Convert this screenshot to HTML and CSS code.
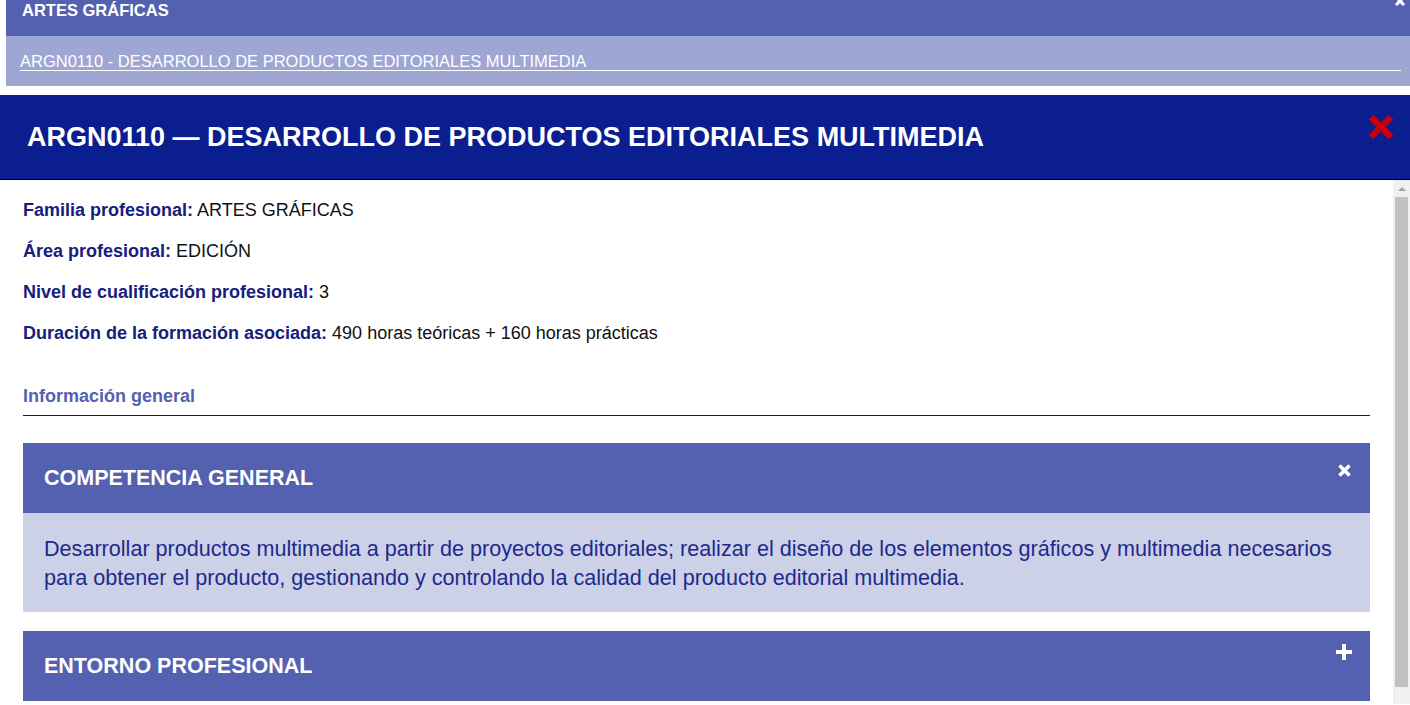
FILE: index.html
```html
<!DOCTYPE html>
<html>
<head>
  <title>ARGN0110 — Desarrollo de productos editoriales multimedia</title>
  <meta charset="UTF-8" />
  <link rel="stylesheet" href="styles.css">
</head>
<body>
  <div class="crumbs">
    <div class="crumb-top">
      ARTES GRÁFICAS
      <svg class="crumb-close" width="12" height="12" viewBox="0 0 12 12">
        <path d="M2 2 L10 10 M10 2 L2 10" stroke="#fff" stroke-width="3" />
      </svg>
    </div>
    <div class="crumb-sub">
      <a class="crumb-link" href="#">ARGN0110 - DESARROLLO DE PRODUCTOS EDITORIALES MULTIMEDIA</a>
    </div>
  </div>

  <div class="modal">
    <div class="modal-head">
      <h1>ARGN0110 — DESARROLLO DE PRODUCTOS EDITORIALES MULTIMEDIA</h1>
      <svg class="modal-close" width="28" height="28" viewBox="0 0 28 28">
        <path d="M4 4 L24 24 M24 4 L4 24" stroke="#c8000a" stroke-width="6.5" />
      </svg>
    </div>

    <div class="modal-body">
      <div class="content">
        <p class="field"><b>Familia profesional:</b> ARTES GRÁFICAS</p>
        <p class="field"><b>Área profesional:</b> EDICIÓN</p>
        <p class="field"><b>Nivel de cualificación profesional:</b> 3</p>
        <p class="field"><b>Duración de la formación asociada:</b> 490 horas teóricas + 160 horas prácticas</p>

        <h3 class="section-title">Información general</h3>

        <div class="acc open">
          <div class="acc-head">
            <span>COMPETENCIA GENERAL</span>
            <svg class="acc-icon icon-x" width="15" height="15" viewBox="0 0 15 15">
              <path d="M2.5 2.5 L12.5 12.5 M12.5 2.5 L2.5 12.5" stroke="#fff" stroke-width="3.6" />
            </svg>
          </div>
          <div class="acc-body">
            Desarrollar productos multimedia a partir de proyectos editoriales; realizar el diseño de los elementos gráficos y multimedia necesarios para obtener el producto, gestionando y controlando la calidad del producto editorial multimedia.
          </div>
        </div>

        <div class="acc">
          <div class="acc-head">
            <span>ENTORNO PROFESIONAL</span>
            <svg class="acc-icon icon-plus" width="16" height="16" viewBox="0 0 16 16">
              <path d="M8 0 V16 M0 8 H16" stroke="#fff" stroke-width="4" />
            </svg>
          </div>
        </div>
      </div>

      <div class="scrollbar">
        <div class="scroll-up"></div>
        <div class="scroll-thumb"></div>
      </div>
    </div>
  </div>
</body>
</html>
```

FILE: styles.css
```css
body {
  margin: 0;
  font-family: "Liberation Sans", Arial, sans-serif;
  background: #fff;
  overflow: hidden;
}

/* breadcrumb bars */
.crumbs {
  margin-left: 6px;
}

.crumb-top {
  position: relative;
  height: 36px;
  box-sizing: border-box;
  padding: 1px 16px 0 16px;
  background: #5461b0;
  color: #fff;
  font-size: 16.5px;
  font-weight: bold;
  line-height: 18px;
}

.crumb-close {
  position: absolute;
  right: 4px;
  top: -5px;
}

.crumb-sub {
  height: 50px;
  box-sizing: border-box;
  padding: 16px 9px 0 14px;
  background: #9ea6d4;
}

.crumb-link {
  display: block;
  color: #fff;
  text-decoration: none;
  font-size: 16.5px;
  line-height: 18px;
  border-bottom: 1px solid #fff;
}

/* modal */
.modal {
  margin-top: 9px;
}

.modal-head {
  height: 84px;
  display: flex;
  align-items: center;
  justify-content: space-between;
  padding: 0 15px 0 27px;
  background: #0b1e8f;
  border-bottom: 1px solid #000;
}

.modal-head h1 {
  margin: 0;
  margin-top: 1px;
  color: #fff;
  font-size: 27px;
  font-weight: bold;
}

.modal-close {
  align-self: flex-start;
  margin-top: 18px;
}

.modal-body {
  display: flex;
  height: 524px;
}

.content {
  flex: 1;
  overflow: hidden;
  padding: 21px 23px 0 23px;
}

.field {
  margin: 0 0 23px 0;
  font-size: 18px;
  line-height: 18px;
  color: #111;
}

.field b {
  color: #16207c;
}

.section-title {
  margin: 45px 0 0 0;
  padding-bottom: 10px;
  font-size: 18px;
  line-height: 18px;
  color: #5461b0;
  border-bottom: 1px solid #1c1f3a;
}

/* accordion */
.acc {
  margin-top: 27px;
}

.acc + .acc {
  margin-top: 19px;
}

.acc-head {
  height: 70px;
  display: flex;
  align-items: center;
  justify-content: space-between;
  padding: 0 18px 0 21px;
  background: #5461b0;
  color: #fff;
  font-size: 21.5px;
  font-weight: bold;
}

.acc-icon {
  align-self: flex-start;
}

.icon-x {
  margin-top: 20px;
}

.icon-plus {
  margin-top: 13px;
}

.acc-body {
  padding: 21px 21px 20px 21px;
  background: #cdd1e8;
  color: #1c2a8c;
  font-size: 21.6px;
  line-height: 29px;
}

/* scrollbar */
.scrollbar {
  width: 17px;
  background: #f0f0f0;
  display: flex;
  flex-direction: column;
  align-items: center;
}

.scroll-up {
  margin-top: 7px;
  width: 0;
  height: 0;
  border-left: 4px solid transparent;
  border-right: 4px solid transparent;
  border-bottom: 4px solid #a3a3a3;
}

.scroll-thumb {
  margin-top: 6px;
  width: 13px;
  height: 490px;
  background: #c1c1c1;
}
```
